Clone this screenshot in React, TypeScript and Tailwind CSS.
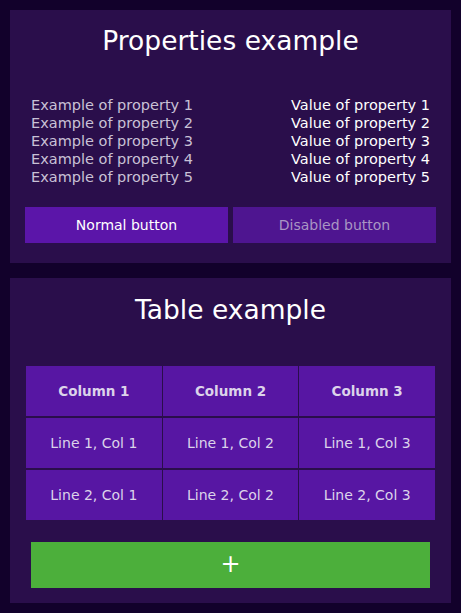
const properties = [1, 2, 3, 4, 5].map((n) => ({
    name: `Example of property ${n}`,
    value: `Value of property ${n}`,
}));

const rows = [
    ["Line 1, Col 1", "Line 1, Col 2", "Line 1, Col 3"],
    ["Line 2, Col 1", "Line 2, Col 2", "Line 2, Col 3"],
];

export default function App() {
    return (
        <div className="min-h-screen bg-[#12012b] p-[10px] flex flex-col gap-[15px] text-white" style={{ fontFamily: "'DejaVu Sans', 'Noto Sans', sans-serif" }}>
            <section className="bg-[#2a0e4b] px-[15px] pt-[15px] pb-[20px]">
                <h1 className="text-center text-[26.5px] leading-[32px] font-normal text-white"> Properties example </h1>
                <div className="mt-[39px] px-[6px] flex flex-col">
                    {
                        properties.map((p) => (
                            <div key={p.name} className="flex justify-between text-[14.5px] leading-[18px]">
                                <span className="text-[#c9c1d6]">{p.name}</span>
                                <span className="text-white">{p.value}</span>
                            </div>
                        ))
                    }
                </div>
                <div className="mt-[21px] grid grid-cols-2 gap-[5px]">
                    <button className="h-[36px] bg-[#5b15a9] text-[14px] text-white">Normal button</button>
                    <button disabled className="h-[36px] bg-[#4e1590] text-[14px] text-[#a995c4]">Disabled button</button>
                </div>
            </section>

            <section className="bg-[#2a0e4b] px-[15px] pt-[16px] pb-[15px]">
                <h1 className="text-center text-[26.5px] leading-[32px] font-normal text-white"> Table example </h1>
                <div className="mt-[40px] mx-[1px] flex flex-col gap-[2px]">
                    <div className="grid grid-cols-3 gap-[1px]">
                        {
                            ["Column 1", "Column 2", "Column 3"].map((c) => (
                                <div key={c} className="h-[50px] flex items-center justify-center bg-[#5716a3] text-[13.5px] font-bold text-[#dcd3ea]">
                                    {c}
                                </div>
                            ))
                        }
                    </div>
                    {
                        rows.map((r, i) => (
                            <div key={`row-${i}`} className="grid grid-cols-3 gap-[1px]">
                                {
                                    r.map((cell) => (
                                        <div key={cell} className="h-[50px] flex items-center justify-center bg-[#5716a3] text-[14px] text-[#dcd3ea]">
                                            {cell}
                                        </div>
                                    ))
                                }
                            </div>
                        ))
                    }
                </div>
                <div className="mt-[22px] px-[6px]">
                    <button className="w-full h-[46px] bg-[#4caf3b] text-white text-[24px] leading-none font-normal flex items-center justify-center pb-[2px]">
                        +
                    </button>
                </div>
            </section>
        </div>
    );
}
